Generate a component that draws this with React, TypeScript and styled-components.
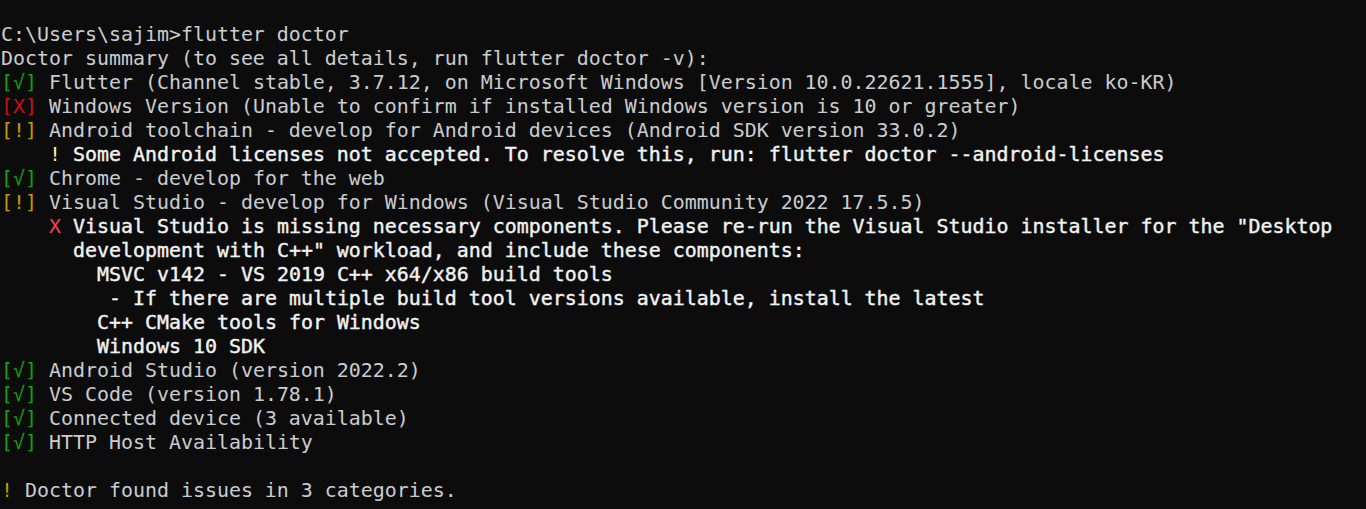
import React from "react";
import styled, { createGlobalStyle } from "styled-components";

const Global = createGlobalStyle`
  html, body {
    margin: 0;
    padding: 0;
    background: #0c0c0c;
  }
  body {
    width: 1366px;
    height: 509px;
    overflow: hidden;
  }
`;

const Terminal = styled.div`
  display: flex;
  flex-direction: column;
  width: 1366px;
  height: 509px;
  box-sizing: border-box;
  padding: 23px 0 0 1px;
  background: #0c0c0c;
  color: #cccccc;
  font-family: "DejaVu Sans Mono", "Liberation Mono", monospace;
  font-size: 19.93px;
  overflow: hidden;
`;

const Line = styled.div<{ $indent?: number }>`
  height: 24px;
  line-height: 24px;
  white-space: pre;
  padding-left: ${(p) => (p.$indent ?? 0) * 12}px;
`;

type Tone = "green" | "red" | "yellow" | "brightYellow" | "brightRed" | "strong";

const tones: Record<Tone, string> = {
  green: "#13a10e",
  red: "#c50f1f",
  yellow: "#c19c00",
  brightYellow: "#f9f1a5",
  brightRed: "#e74856",
  strong: "#f2f2f2",
};

const Span = styled.span<{ $tone: Tone }>`
  color: ${(p) => tones[p.$tone]};
  -webkit-text-stroke: ${(p) => (p.$tone === "strong" ? "0.4px #f2f2f2" : "0")};
`;

const Status: React.FC<{ kind: "ok" | "x" | "warn" }> = ({ kind }) => {
  const tone: Tone = kind === "ok" ? "green" : kind === "x" ? "red" : "yellow";
  const mark = kind === "ok" ? "√" : kind === "x" ? "X" : "!";
  return <Span $tone={tone}>[{mark}]</Span>;
};

export default function App() {
  return (
    <>
      <Global />
      <Terminal>
        <Line>C:\Users\sajim&gt;flutter doctor</Line>
        <Line>Doctor summary (to see all details, run flutter doctor -v):</Line>
        <Line>
          <Status kind="ok" /> Flutter (Channel stable, 3.7.12, on Microsoft Windows [Version 10.0.22621.1555], locale ko-KR)
        </Line>
        <Line>
          <Status kind="x" /> Windows Version (Unable to confirm if installed Windows version is 10 or greater)
        </Line>
        <Line>
          <Status kind="warn" /> Android toolchain - develop for Android devices (Android SDK version 33.0.2)
        </Line>
        <Line $indent={4}>
          <Span $tone="brightYellow">!</Span>{" "}
          <Span $tone="strong">Some Android licenses not accepted. To resolve this, run: flutter doctor --android-licenses</Span>
        </Line>
        <Line>
          <Status kind="ok" /> Chrome - develop for the web
        </Line>
        <Line>
          <Status kind="warn" /> Visual Studio - develop for Windows (Visual Studio Community 2022 17.5.5)
        </Line>
        <Line $indent={4}>
          <Span $tone="brightRed">X</Span>{" "}
          <Span $tone="strong">Visual Studio is missing necessary components. Please re-run the Visual Studio installer for the "Desktop</Span>
        </Line>
        <Line $indent={6}>
          <Span $tone="strong">development with C++" workload, and include these components:</Span>
        </Line>
        <Line $indent={8}>
          <Span $tone="strong">MSVC v142 - VS 2019 C++ x64/x86 build tools</Span>
        </Line>
        <Line $indent={8}>
          <Span $tone="strong"> - If there are multiple build tool versions available, install the latest</Span>
        </Line>
        <Line $indent={8}>
          <Span $tone="strong">C++ CMake tools for Windows</Span>
        </Line>
        <Line $indent={8}>
          <Span $tone="strong">Windows 10 SDK</Span>
        </Line>
        <Line>
          <Status kind="ok" /> Android Studio (version 2022.2)
        </Line>
        <Line>
          <Status kind="ok" /> VS Code (version 1.78.1)
        </Line>
        <Line>
          <Status kind="ok" /> Connected device (3 available)
        </Line>
        <Line>
          <Status kind="ok" /> HTTP Host Availability
        </Line>
        <Line />
        <Line>
          <Span $tone="yellow">!</Span> Doctor found issues in 3 categories.
        </Line>
      </Terminal>
    </>
  );
}
